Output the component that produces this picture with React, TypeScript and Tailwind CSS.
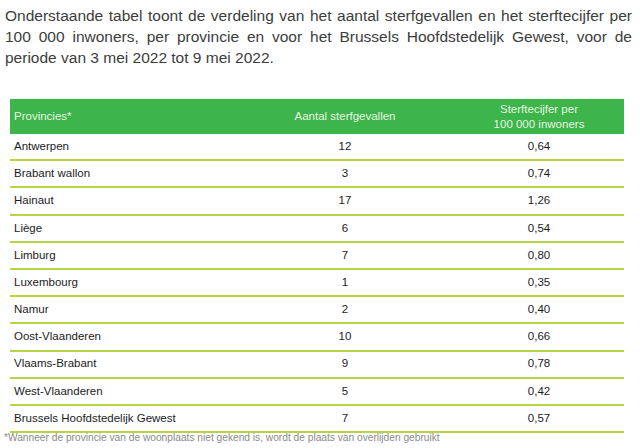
const rows: [string, string, string][] = [
  ["Antwerpen", "12", "0,64"],
  ["Brabant wallon", "3", "0,74"],
  ["Hainaut", "17", "1,26"],
  ["Liège", "6", "0,54"],
  ["Limburg", "7", "0,80"],
  ["Luxembourg", "1", "0,35"],
  ["Namur", "2", "0,40"],
  ["Oost-Vlaanderen", "10", "0,66"],
  ["Vlaams-Brabant", "9", "0,78"],
  ["West-Vlaanderen", "5", "0,42"],
  ["Brussels Hoofdstedelijk Gewest", "7", "0,57"],
];

const intro = [
  "Onderstaande tabel toont de verdeling van het aantal sterfgevallen en het sterftecijfer per",
  "100\u00a0000 inwoners, per provincie en voor het Brussels Hoofdstedelijk Gewest, voor de",
];

export default function App() {
  return (
    <div
      className="w-[640px] h-[448px] bg-white overflow-hidden"
      style={{ fontFamily: '"Liberation Sans", Arial, sans-serif' }}
    >
      <div className="pl-[5px] pr-[8px] pt-[5px] text-[15.5px] leading-[21px] text-[#3c3c3c]">
        {intro.map((line) => (
          <div key={line} className="text-justify [text-align-last:justify] whitespace-nowrap">
            {line}
          </div>
        ))}
        <div>periode van 3 mei 2022 tot 9 mei 2022.</div>
      </div>

      <div className="ml-[10px] w-[614px] mt-[31px]">
        <div className="flex items-center h-[35px] bg-[#3db54a] text-[#e6f4e4] text-[11.5px] leading-[15px]">
          <div className="w-[226px] pl-[4px]">Provincies*</div>
          <div className="w-[218px] text-center">Aantal sterfgevallen</div>
          <div className="flex-1 text-center">
            Sterftecijfer per
            <br />
            100 000 inwoners
          </div>
        </div>
        {rows.map(([name, count, rate]) => (
          <div
            key={name}
            className="flex items-center h-[27.2px] border-b-2 border-[#b7d445] text-[11.5px] text-[#1c1c1c]"
          >
            <div className="w-[226px] pl-[4px]">{name}</div>
            <div className="w-[218px] text-center">{count}</div>
            <div className="flex-1 text-center">{rate}</div>
          </div>
        ))}
        <div className="text-[10.2px] leading-[12px] text-[#8a8a8a] -mt-[1px] -ml-[6px]">
          *Wanneer de provincie van de woonplaats niet gekend is, wordt de plaats van overlijden gebruikt
        </div>
      </div>
    </div>
  );
}
